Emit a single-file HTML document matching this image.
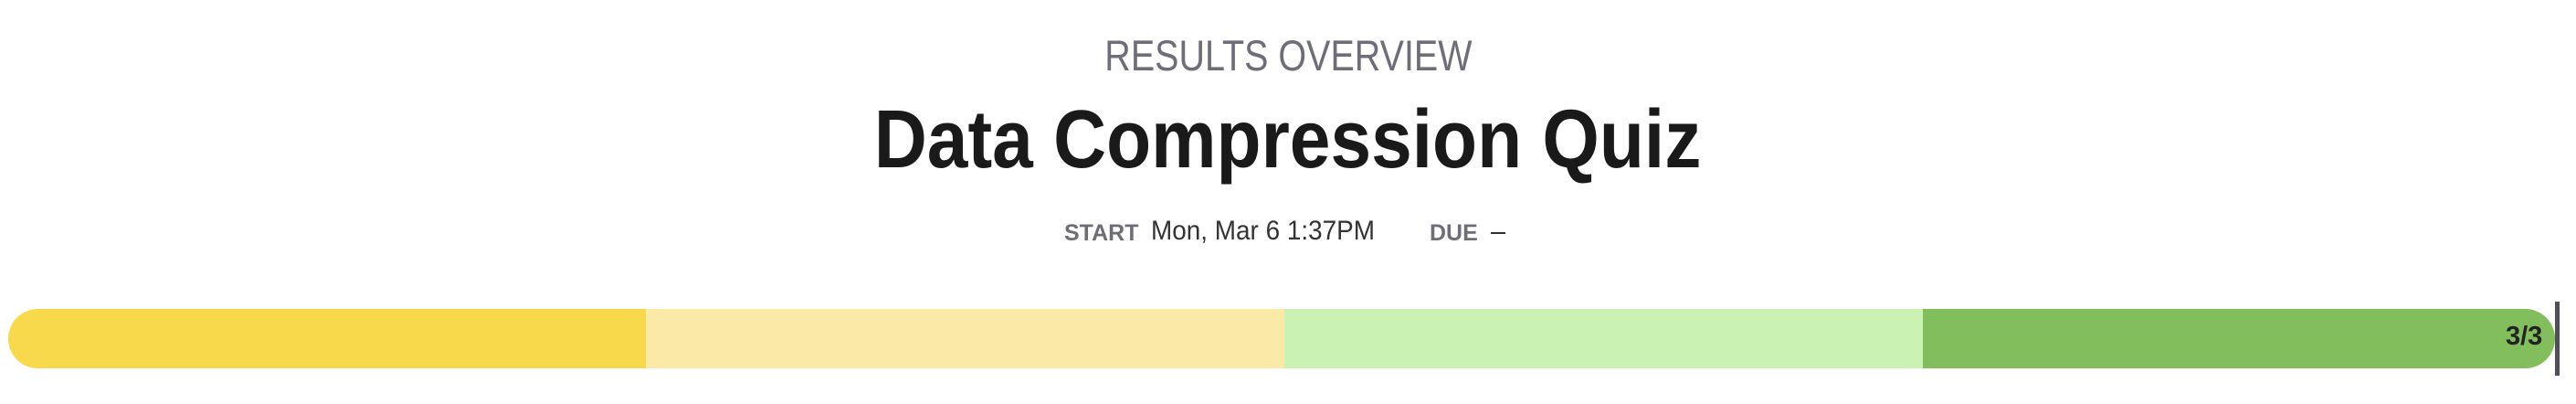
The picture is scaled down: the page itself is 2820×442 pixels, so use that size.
<!DOCTYPE html>
<html><head><meta charset="utf-8"><style>
html,body{margin:0;padding:0;width:2820px;height:442px;background:#fff;overflow:hidden;font-family:"Liberation Sans",Arial,sans-serif;position:relative}
.c{position:absolute;left:0;width:2820px;text-align:center;white-space:nowrap}
.c span{display:inline-block}
.sub{top:33px;font-size:47px;color:#6e6e78}
.sub span{transform:scaleX(0.84)}
.title{top:102px;font-size:90px;font-weight:bold;color:#1a1a1a}
.title span{transform:scaleX(0.892)}
.meta{position:absolute;top:236px;font-size:30px;color:#333;white-space:nowrap}
.lbl{font-size:25px;font-weight:bold;color:#6e6e78}
.bar{position:absolute;top:338px;height:65px;}
</style></head><body>
<div class="c sub"><span>RESULTS OVERVIEW</span></div>
<div class="c title"><span>Data Compression Quiz</span></div>
<div class="meta lbl" style="left:1165px;top:241px">START</div>
<div class="meta" style="left:1260px;transform-origin:left;transform:scaleX(0.93)">Mon, Mar 6 1:37PM</div>
<div class="meta lbl" style="left:1565px;top:241px">DUE</div>
<div style="position:absolute;left:1632px;top:254px;width:16px;height:2px;background:#333"></div>
<div class="bar" style="left:9px;width:698px;background:#f8d94b;border-radius:33px 0 0 33px"></div>
<div class="bar" style="left:707px;width:699px;background:#fbeaa7"></div>
<div class="bar" style="left:1406px;width:699px;background:#caf2b2"></div>
<div class="bar" style="left:2105px;width:692px;background:#82be5c;border-radius:0 33px 33px 0"></div>
<div style="position:absolute;left:2743px;top:352px;font-size:29px;font-weight:bold;color:#222">3/3</div>
<div style="position:absolute;left:2797px;top:330px;width:5px;height:81px;background:#50505a"></div>
</body></html>
